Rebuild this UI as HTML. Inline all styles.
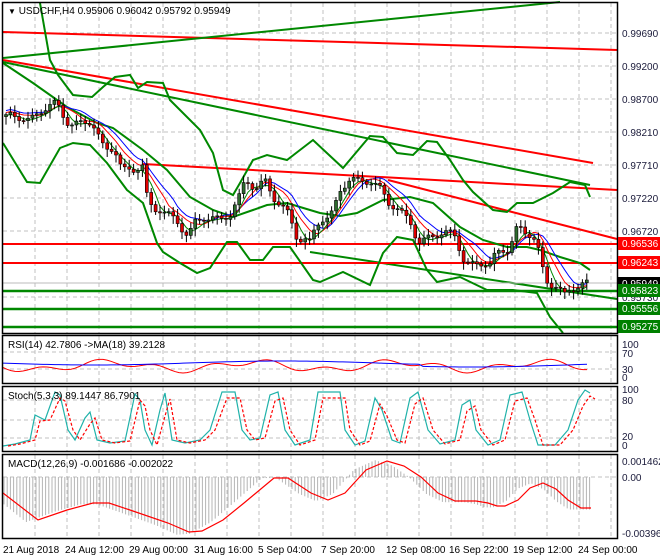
<!DOCTYPE html>
<html><head><meta charset="utf-8"><style>
html,body{margin:0;padding:0;background:#fff;}
svg{display:block;font-family:"Liberation Sans",sans-serif;}
</style></head><body>
<svg id="s" width="660" height="560" xmlns="http://www.w3.org/2000/svg">
<rect width="660" height="560" fill="#fff"/>
<g id="grid" stroke="#c0c0c0" stroke-dasharray="4,3" stroke-width="1"></g>
<g id="main"></g>
<g fill="none" stroke="#000" stroke-width="1.5">
<rect x="2.5" y="2.5" width="615" height="331"/>
<rect x="2.5" y="335.5" width="615" height="48"/>
<rect x="2.5" y="386.5" width="615" height="65"/>
<rect x="2.5" y="454.5" width="615" height="84"/>
</g>
<g font-size="10" fill="#000">
<text x="8" y="14"><tspan font-size="8">▼</tspan> USDCHF,H4  0.95906 0.96042 0.95792 0.95949</text>
<text x="8" y="348">RSI(14) 42.7806  -&gt;MA(18) 39.2128</text>
<text x="8" y="399">Stoch(5,3,3) 89.1447 86.7901</text>
<text x="8" y="467">MACD(12,26,9) -0.001686 -0.002022</text>
</g>
<g font-size="10" fill="#1a1a3a" id="ax">
<text x="622" y="37">0.99690</text><text x="622" y="70">0.99200</text><text x="622" y="103">0.98700</text>
<text x="622" y="136">0.98210</text><text x="622" y="169">0.97710</text><text x="622" y="202">0.97220</text>
<text x="622" y="235">0.96720</text><text x="622" y="301">0.95730</text>
<text x="622" y="348">100</text><text x="622" y="357">70</text><text x="622" y="373">30</text><text x="622" y="381">0</text>
<text x="622" y="393">100</text><text x="622" y="404">80</text><text x="622" y="440">20</text><text x="622" y="449">0</text>
<text x="622" y="465">0.001462</text><text x="622" y="481">0.00</text><text x="622" y="537">-0.003964</text>
</g>
<rect x="618" y="237" width="42" height="13" fill="#ff0000"/><text x="622" y="247" font-size="10" fill="#fff">0.96536</text>
<rect x="618" y="256" width="42" height="13" fill="#ff0000"/><text x="622" y="266" font-size="10" fill="#fff">0.96243</text>
<rect x="618" y="277" width="42" height="12" fill="#000"/><text x="622" y="287" font-size="10" fill="#fff">0.95949</text>
<rect x="618" y="284" width="42" height="13" fill="#008000"/><text x="622" y="294" font-size="10" fill="#fff">0.95823</text>
<rect x="618" y="302" width="42" height="13" fill="#008000"/><text x="622" y="312" font-size="10" fill="#fff">0.95556</text>
<rect x="618" y="320" width="42" height="13" fill="#008000"/><text x="622" y="330" font-size="10" fill="#fff">0.95275</text>
<g font-size="10" fill="#000">
<text x="3" y="553">21 Aug 2018</text><text x="65" y="553">24 Aug 12:00</text><text x="129" y="553">29 Aug 00:00</text>
<text x="194" y="553">31 Aug 16:00</text><text x="258" y="553">5 Sep 04:00</text><text x="321" y="553">7 Sep 20:00</text>
<text x="386" y="553">12 Sep 08:00</text><text x="449" y="553">16 Sep 22:00</text><text x="513" y="553">19 Sep 12:00</text>
<text x="578" y="553">24 Sep 00:00</text>
</g>
</svg>
<script>
(function(){
var NS="http://www.w3.org/2000/svg";
function el(p,t,a){var e=document.createElementNS(NS,t);for(var k in a)e.setAttribute(k,a[k]);p.appendChild(e);return e;}
var g=document.getElementById('grid'),m=document.getElementById('main');
var vx=[35,67,99,131,163,195,227,259,291,323,355,387,419,451,483,515,547,579,611];
var panels=[[3,333],[336,383],[387,451],[455,538]];
vx.forEach(function(x){panels.forEach(function(p){el(g,'line',{x1:x,y1:p[0],x2:x,y2:p[1]});});});
[33,66,99,132,165,198,231,297].forEach(function(y){el(g,'line',{x1:3,y1:y,x2:617,y2:y});});
[352,369].forEach(function(y){el(g,'line',{x1:3,y1:y,x2:617,y2:y});});
[400,420,438].forEach(function(y){el(g,'line',{x1:3,y1:y,x2:617,y2:y});});
el(g,'line',{x1:3,y1:477,x2:617,y2:477});
function pl(pts,c,w,extra){var a={points:pts.map(function(p){return p.join(',')}).join(' '),fill:'none',stroke:c,'stroke-width':w};for(var k in extra)a[k]=extra[k];return el(m,'polyline',a);}
function ln(x1,y1,x2,y2,c,w){el(m,'line',{x1:x1,y1:y1,x2:x2,y2:y2,stroke:c,'stroke-width':w});}
// trend lines
ln(3,32,617,50,'#f00',2);
ln(3,60,593,163,'#f00',2);
ln(143,164,617,190,'#f00',2);
ln(388,180,617,239,'#f00',2);
ln(3,58,560,2,'#080',2);
ln(3,62,590,185,'#080',2);
ln(310,252,617,299,'#080',2);
ln(3,244,617,244,'#f00',2);
ln(3,263,617,263,'#f00',2);
ln(3,283,617,283,'#bbb',1);
ln(3,291,617,291,'#080',2.5);
ln(3,309,617,309,'#080',2.5);
ln(3,327,617,327,'#080',2.5);
// bollinger
pl([[40,3],[50,60],[58,75],[73,95],[92,97],[103,87],[115,77],[130,75],[138,88],[147,82],[163,83],[170,100],[200,130],[213,153],[223,190],[233,195],[240,183],[253,160],[267,155],[287,160],[300,150],[313,140],[343,168],[370,136],[383,137],[397,153],[413,155],[427,141],[437,142],[450,160],[463,180],[473,192],[493,210],[507,212],[517,203],[533,203],[553,193],[570,182],[585,185],[590,197]],'#080',2);
pl([[3,63],[33,83],[67,107],[97,123],[113,128],[143,150],[167,170],[190,197],[213,210],[233,217],[253,210],[267,205],[287,203],[300,207],[320,213],[340,216],[357,213],[383,200],[410,197],[433,203],[460,227],[483,240],[507,247],[527,247],[540,250],[560,257],[580,263],[590,270]],'#080',2);
pl([[3,143],[27,182],[40,183],[60,148],[73,143],[90,145],[107,163],[127,190],[143,203],[157,243],[163,252],[180,263],[197,273],[210,268],[227,242],[237,242],[250,260],[263,260],[273,247],[290,247],[313,280],[320,282],[343,272],[370,285],[383,253],[397,237],[413,240],[427,270],[437,282],[460,277],[487,290],[513,290],[537,293],[550,317],[563,333]],'#080',2);
// price path
var P=[[3,118],[10,115],[20,118],[30,120],[40,112],[50,105],[55,103],[60,108],[65,120],[70,125],[80,123],[90,122],[95,128],[100,140],[105,150],[110,148],[115,150],[120,165],[125,170],[135,170],[143,165],[145,190],[150,205],[155,210],[160,210],[165,212],[170,215],[175,220],[180,225],[185,235],[190,232],[195,222],[205,218],[215,218],[220,220],[230,215],[240,195],[245,180],[250,183],[255,190],[260,185],[265,180],[270,190],[275,200],[285,210],[290,215],[295,235],[300,240],[305,240],[310,242],[315,228],[320,220],[330,218],[335,205],[340,190],[345,185],[350,180],[360,180],[370,182],[375,185],[380,188],[385,195],[390,205],[395,208],[400,212],[405,215],[410,220],[415,235],[420,245],[425,240],[430,235],[440,235],[450,232],[455,235],[460,250],[465,265],[470,265],[480,263],[490,265],[495,255],[500,250],[510,250],[515,230],[520,228],[525,232],[530,235],[535,240],[540,255],[545,280],[550,285],[555,285],[560,290],[565,295],[570,290],[575,288],[580,285],[585,283],[590,283]];
function at(x){for(var i=1;i<P.length;i++){if(x<=P[i][0]){var a=P[i-1],b=P[i];return a[1]+(b[1]-a[1])*(x-a[0])/(b[0]-a[0]);}}return P[P.length-1][1];}
var closes=[],xs=[];for(var x=6;x<=590;x+=4.4){xs.push(x);closes.push(at(x)+Math.sin(x*1.7)*3);}
function ma(n,shift){var r=[];for(var i=0;i<closes.length;i++){var s=0,c=0;for(var j=Math.max(0,i-n+1);j<=i;j++){s+=closes[j];c++;}r.push([xs[i],s/c+shift]);}return r;}
pl(ma(8,-4),'#00f',1);pl(ma(6,-2),'#f00',1);pl(ma(4,1),'#080',1);
for(var i=0;i<closes.length;i++){var o=i?closes[i-1]:closes[0]+2,c=closes[i];var top=Math.min(o,c),bot=Math.max(o,c);var h=top-2-Math.abs(Math.sin(i*2.3))*5,l=bot+2+Math.abs(Math.cos(i*1.9))*6;
ln(xs[i],h,xs[i],l,'#000',1);
el(m,'rect',{x:xs[i]-1.5,y:top,width:3,height:Math.max(1,bot-top),fill:c<o?'#2e6b2e':'#e00000',stroke:'#000','stroke-width':0.6});}
// RSI
var rb=[],rr=[];for(var x=3;x<=590;x+=4){rb.push([x,363+2*Math.sin(x/60)+(x>420?2:0)]);rr.push([x,366+4*Math.sin(x/23)+3*Math.sin(x/9)]);}
pl(rr,'#f00',1);pl(rb,'#00f',1);
// Stoch
var pk=[[3,446],[15,444],[30,440],[35,415],[45,420],[55,392],[60,395],[68,430],[75,440],[85,418],[90,412],[97,440],[110,443],[125,441],[135,394],[140,400],[145,430],[152,445],[160,410],[165,393],[172,440],[185,443],[200,440],[210,430],[222,392],[235,392],[242,430],[250,440],[260,438],[270,395],[278,392],[285,430],[295,445],[310,440],[318,392],[340,392],[345,430],[355,445],[365,441],[375,398],[382,410],[392,440],[400,443],[410,398],[418,392],[428,430],[440,444],[455,440],[462,405],[470,400],[476,430],[488,445],[500,440],[510,395],[522,392],[530,420],[538,445],[555,445],[568,430],[578,400],[585,390],[590,393]];
pl(pk,'#20b2aa',1.2);pl(pk.map(function(p){return [p[0]+5,p[1]+(p[1]<420?6:0)]}),'#f00',1.2,{'stroke-dasharray':'3,2'});
// MACD
var R=[[3,493],[38,520],[67,510],[93,503],[109,503],[130,510],[168,523],[189,532],[202,531],[223,520],[244,503],[274,478],[288,478],[311,493],[328,500],[345,493],[366,470],[387,461],[404,466],[421,477],[438,493],[455,501],[476,501],[488,503],[497,506],[505,506],[518,500],[530,488],[543,483],[556,489],[568,500],[581,508],[591,508]];
function ar(x){for(var i=1;i<R.length;i++){if(x<=R[i][0]){var a=R[i-1],b=R[i];return a[1]+(b[1]-a[1])*(x-a[0])/(b[0]-a[0]);}}return R[R.length-1][1];}
for(var x=4;x<=592;x+=3.2){var v=ar(Math.min(591,x+12));ln(x,477,x,477+(v-477)*1.05,'#b4b4b4',1);}
pl(R,'#f00',1.2);
})();
</script>
</body></html>
